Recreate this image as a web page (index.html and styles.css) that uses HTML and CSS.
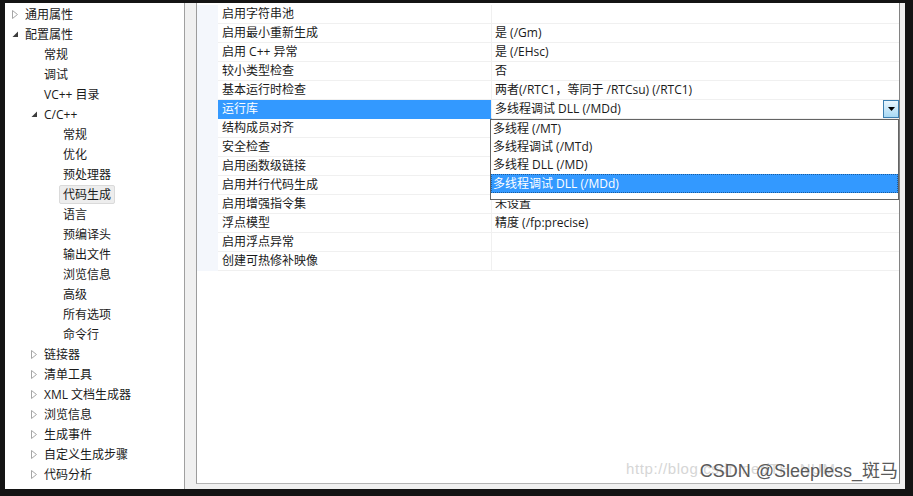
FILE: index.html
```html
<!DOCTYPE html>
<html lang="zh-CN">
<head>
    <meta charset="UTF-8">
    <title>属性页 - 代码生成</title>
    <link rel="stylesheet" href="styles.css">
</head>
<body>
    <div class="window">
        <div class="tree">
            <div class="item lv0"><span class="arrow"><svg width="6" height="9" viewBox="0 0 6 9"><path d="M0.5 0.5 L5.5 4.5 L0.5 8.5 Z" fill="#fff" stroke="#a6a6a6"/></svg></span><span class="label">通用属性</span></div>
            <div class="item lv0"><span class="arrow"><svg width="7" height="7" viewBox="0 0 7 7"><path d="M6 0.5 L6 6 L0.5 6 Z" fill="#3c3c3c"/></svg></span><span class="label">配置属性</span></div>
            <div class="item lv1"><span class="arrow"></span><span class="label">常规</span></div>
            <div class="item lv1"><span class="arrow"></span><span class="label">调试</span></div>
            <div class="item lv1"><span class="arrow"></span><span class="label">VC++ 目录</span></div>
            <div class="item lv1"><span class="arrow"><svg width="7" height="7" viewBox="0 0 7 7"><path d="M6 0.5 L6 6 L0.5 6 Z" fill="#3c3c3c"/></svg></span><span class="label">C/C++</span></div>
            <div class="item lv2"><span class="arrow"></span><span class="label">常规</span></div>
            <div class="item lv2"><span class="arrow"></span><span class="label">优化</span></div>
            <div class="item lv2"><span class="arrow"></span><span class="label">预处理器</span></div>
            <div class="item lv2"><span class="arrow"></span><span class="label current">代码生成</span></div>
            <div class="item lv2"><span class="arrow"></span><span class="label">语言</span></div>
            <div class="item lv2"><span class="arrow"></span><span class="label">预编译头</span></div>
            <div class="item lv2"><span class="arrow"></span><span class="label">输出文件</span></div>
            <div class="item lv2"><span class="arrow"></span><span class="label">浏览信息</span></div>
            <div class="item lv2"><span class="arrow"></span><span class="label">高级</span></div>
            <div class="item lv2"><span class="arrow"></span><span class="label">所有选项</span></div>
            <div class="item lv2"><span class="arrow"></span><span class="label">命令行</span></div>
            <div class="item lv1"><span class="arrow"><svg width="6" height="9" viewBox="0 0 6 9"><path d="M0.5 0.5 L5.5 4.5 L0.5 8.5 Z" fill="#fff" stroke="#a6a6a6"/></svg></span><span class="label">链接器</span></div>
            <div class="item lv1"><span class="arrow"><svg width="6" height="9" viewBox="0 0 6 9"><path d="M0.5 0.5 L5.5 4.5 L0.5 8.5 Z" fill="#fff" stroke="#a6a6a6"/></svg></span><span class="label">清单工具</span></div>
            <div class="item lv1"><span class="arrow"><svg width="6" height="9" viewBox="0 0 6 9"><path d="M0.5 0.5 L5.5 4.5 L0.5 8.5 Z" fill="#fff" stroke="#a6a6a6"/></svg></span><span class="label">XML 文档生成器</span></div>
            <div class="item lv1"><span class="arrow"><svg width="6" height="9" viewBox="0 0 6 9"><path d="M0.5 0.5 L5.5 4.5 L0.5 8.5 Z" fill="#fff" stroke="#a6a6a6"/></svg></span><span class="label">浏览信息</span></div>
            <div class="item lv1"><span class="arrow"><svg width="6" height="9" viewBox="0 0 6 9"><path d="M0.5 0.5 L5.5 4.5 L0.5 8.5 Z" fill="#fff" stroke="#a6a6a6"/></svg></span><span class="label">生成事件</span></div>
            <div class="item lv1"><span class="arrow"><svg width="6" height="9" viewBox="0 0 6 9"><path d="M0.5 0.5 L5.5 4.5 L0.5 8.5 Z" fill="#fff" stroke="#a6a6a6"/></svg></span><span class="label">自定义生成步骤</span></div>
            <div class="item lv1"><span class="arrow"><svg width="6" height="9" viewBox="0 0 6 9"><path d="M0.5 0.5 L5.5 4.5 L0.5 8.5 Z" fill="#fff" stroke="#a6a6a6"/></svg></span><span class="label">代码分析</span></div>
        </div>
        <div class="splitter"></div>
        <div class="grid-wrap">
            <div class="grid">
                <div class="row"><span class="gutter"></span><span class="name">启用字符串池</span><span class="value"></span></div>
                <div class="row"><span class="gutter"></span><span class="name">启用最小重新生成</span><span class="value">是 (/Gm)</span></div>
                <div class="row"><span class="gutter"></span><span class="name">启用 C++ 异常</span><span class="value">是 (/EHsc)</span></div>
                <div class="row"><span class="gutter"></span><span class="name">较小类型检查</span><span class="value">否</span></div>
                <div class="row"><span class="gutter"></span><span class="name">基本运行时检查</span><span class="value">两者(/RTC1，等同于 /RTCsu) (/RTC1)</span></div>
                <div class="row"><span class="gutter"></span><span class="name selected">运行库</span>
                    <span class="value combo">多线程调试 DLL (/MDd)
                        <span class="drop-btn"><svg width="7" height="4" viewBox="0 0 7 4"><path d="M0 0 H7 L3.5 4 Z" fill="#000"/></svg></span>
                        <span class="drop-list">
                            <span class="opt">多线程 (/MT)</span>
                            <span class="opt">多线程调试 (/MTd)</span>
                            <span class="opt">多线程 DLL (/MD)</span>
                            <span class="opt active">多线程调试 DLL (/MDd)</span>
                        </span>
                    </span>
                </div>
                <div class="row"><span class="gutter"></span><span class="name">结构成员对齐</span><span class="value"></span></div>
                <div class="row"><span class="gutter"></span><span class="name">安全检查</span><span class="value"></span></div>
                <div class="row"><span class="gutter"></span><span class="name">启用函数级链接</span><span class="value"></span></div>
                <div class="row"><span class="gutter"></span><span class="name">启用并行代码生成</span><span class="value"></span></div>
                <div class="row"><span class="gutter"></span><span class="name">启用增强指令集</span><span class="value">未设置</span></div>
                <div class="row"><span class="gutter"></span><span class="name">浮点模型</span><span class="value">精度 (/fp:precise)</span></div>
                <div class="row"><span class="gutter"></span><span class="name">启用浮点异常</span><span class="value"></span></div>
                <div class="row"><span class="gutter"></span><span class="name">创建可热修补映像</span><span class="value"></span></div>
            </div>
        </div>
    </div>
    <div class="watermark">
        <span class="wm-url">http://blog.csdn.net/TH_NUM</span>
        <span class="wm-csdn">CSDN @Sleepless_斑马</span>
    </div>
</body>
</html>
```

FILE: styles.css
```css
body {
    margin: 0;
    width: 913px;
    height: 496px;
    background: #141414;
    font-family: "Open Sans", "Noto Sans CJK SC", sans-serif;
    font-size: 12px;
    color: #1a1a1a;
    position: relative;
    overflow: hidden;
}

.window {
    display: flex;
    height: 486px;
    padding: 3px 8px 7px 5px;
}

/* left tree */
.tree {
    width: 179px;
    background: #fff;
    border-right: 1px solid #a0a0a0;
    padding-top: 1px;
}

.item {
    display: flex;
    align-items: center;
    height: 20px;
}

.lv0 { padding-left: 0; }
.lv1 { padding-left: 19px; }
.lv2 { padding-left: 38px; }

.arrow {
    width: 16px;
    flex: none;
    display: flex;
    align-items: center;
}

.arrow svg {
    margin-left: 7px;
}

.label {
    height: 19px;
    line-height: 19px;
    padding: 0 4px;
    white-space: nowrap;
    box-sizing: border-box;
}

.label.current {
    background: #ededed;
    border: 1px solid #dadada;
    border-radius: 2px;
    padding: 0 3px;
    line-height: 17px;
}

.splitter {
    width: 11px;
    background: #f0f0f0;
}

/* property grid */
.grid-wrap {
    flex: 1;
    display: flex;
    background: #f0f0f0;
    padding: 0 5px 5px 0;
}

.grid {
    flex: 1;
    background: #fff;
    border-left: 1px solid #9c9c9c;
    border-right: 1px solid #828282;
    border-bottom: 1px solid #b4b4b4;
    padding-top: 2px;
}

.row {
    display: flex;
    height: 19px;
}

.gutter {
    width: 21px;
    flex: none;
    background: #f4f7fc;
}

.name,
.value {
    line-height: 18px;
    border-bottom: 1px solid #f0f0f0;
    white-space: nowrap;
}

.name {
    width: 269px;
    flex: none;
    padding-left: 4px;
    border-right: 1px solid #f0f0f0;
}

.name.selected {
    background: #3399ff;
    color: #fff;
    border-bottom-color: #3399ff;
}

.value {
    flex: 1;
    padding-left: 3px;
}

.combo {
    position: relative;
}

.drop-btn {
    position: absolute;
    top: 0;
    right: 0;
    width: 14px;
    height: 16px;
    border: 1px solid #3c7fb1;
    background: linear-gradient(#eaf6fd, #a7d9f5);
    display: flex;
    align-items: center;
    justify-content: center;
}

.drop-list {
    position: absolute;
    top: 19px;
    left: -2px;
    right: 0;
    height: 79px;
    background: #fff;
    border: 1px solid #646464;
    display: flex;
    flex-direction: column;
    z-index: 2;
}

.opt {
    height: 18px;
    line-height: 18px;
    padding-left: 2px;
    box-sizing: border-box;
}

.opt.active {
    height: 19px;
    background: #3399ff;
    color: #fff;
    border: 1px dotted #1a5c9e;
    padding-left: 1px;
    line-height: 17px;
}

/* watermark over the corner */
.watermark {
    position: absolute;
    right: 15px;
    bottom: 12px;
    width: 272px;
    height: 30px;
}

.wm-url {
    position: absolute;
    left: 0;
    top: 6px;
    font-family: "Liberation Sans", sans-serif;
    font-size: 15px;
    color: #d6d6d6;
    letter-spacing: 0.6px;
}

.wm-csdn {
    position: absolute;
    right: 0;
    top: 2px;
    font-family: "Liberation Sans", "Noto Sans CJK SC", sans-serif;
    font-size: 18px;
    color: #5a5a5a;
}
```
